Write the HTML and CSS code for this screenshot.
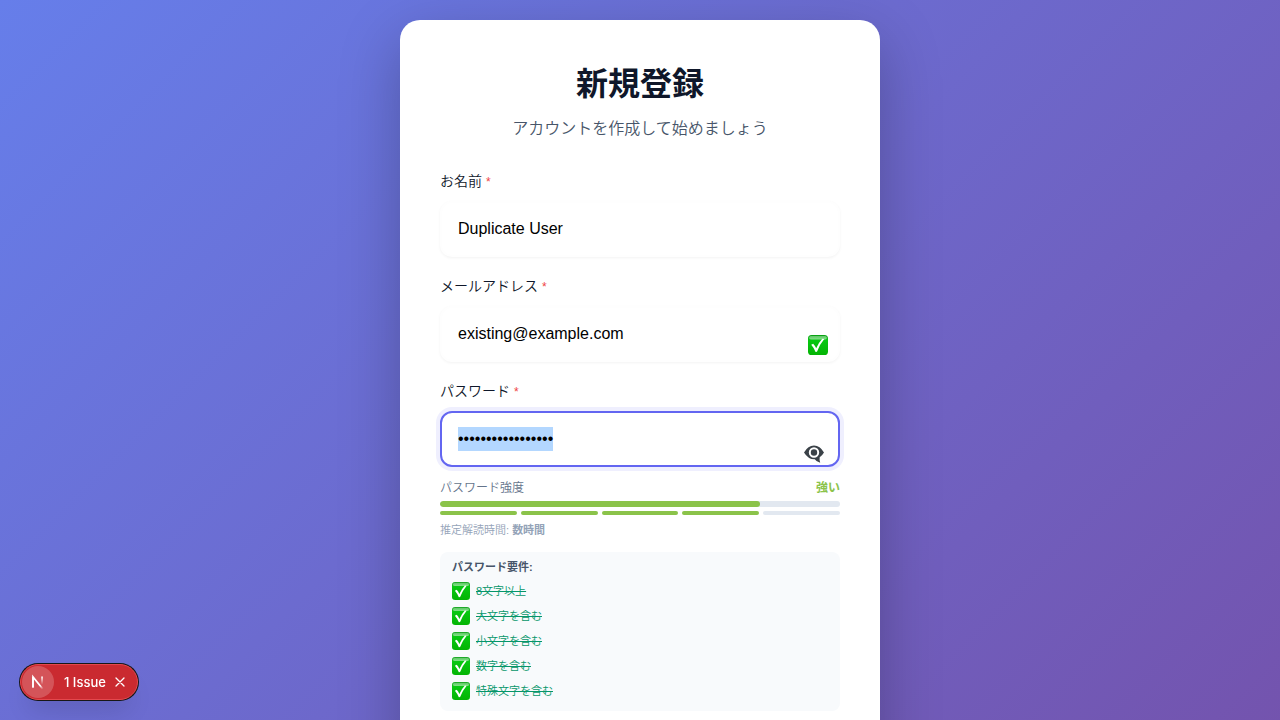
FILE: index.html
```html
<!DOCTYPE html>
<html lang="ja">
<head>
<meta charset="utf-8">
<meta name="viewport" content="width=device-width, initial-scale=1">
<title>新規登録</title>
<link rel="stylesheet" href="styles.css">
</head>
<body>
<svg class="defs" aria-hidden="true">
  <defs>
    <linearGradient id="green" x1="0" y1="0" x2="0" y2="1">
      <stop offset="0" stop-color="#0a9d14"/><stop offset=".25" stop-color="#08c812"/><stop offset="1" stop-color="#04b404"/>
    </linearGradient>
    <linearGradient id="shine" x1="0" y1="0" x2="0" y2="1">
      <stop offset="0" stop-color="#fff" stop-opacity=".35"/><stop offset="1" stop-color="#fff" stop-opacity=".5"/>
    </linearGradient>
    <linearGradient id="fade" x1="0" y1="0" x2="0" y2="1">
      <stop offset="0" stop-color="#fff"/><stop offset="1" stop-color="#fff" stop-opacity="0"/>
    </linearGradient>
    <linearGradient id="tail" gradientUnits="userSpaceOnUse" x1="9" y1="10" x2="13" y2="15">
      <stop offset=".3" stop-color="#fff"/><stop offset="1" stop-color="#fff" stop-opacity="0"/>
    </linearGradient>
  </defs>
  <symbol id="check" viewBox="0 0 20 20">
    <rect width="20" height="20" rx="3.6" fill="url(#green)"/>
    <rect x="1.1" y=".9" width="17.8" height="3.6" rx="1.8" fill="url(#shine)"/>
    <path d="M3.2 9.8 5.2 8.7Q7 10.6 8.2 13.2 11 7.200 14.300 3.800L16.300 4.100Q11.600 9.600 9 16.700L7.600 16.900Q5.800 12.800 3.200 9.800Z" fill="#fff"/>
  </symbol>
</svg>
<div class="scroller">
<main class="page">
  <form class="card">
    <header class="header">
      <h1 class="title">新規登録</h1>
      <p class="subtitle">アカウントを作成して始めましょう</p>
    </header>
    <div class="fields">
      <div class="field">
        <label class="label" for="name">お名前 <span class="required">*</span></label>
        <input class="input" id="name" type="text" value="Duplicate User">
      </div>
      <div class="field">
        <label class="label" for="email">メールアドレス <span class="required">*</span></label>
        <div class="control">
          <input class="input" id="email" type="email" value="existing@example.com">
          <svg class="valid" aria-hidden="true"><use href="#check"/></svg>
        </div>
      </div>
      <div class="field">
        <label class="label" for="password">パスワード <span class="required">*</span></label>
        <div class="control">
          <input class="input" id="password" type="password" value="SecurePassword123">
          <button class="toggle" type="button" aria-label="パスワードを表示">
            <svg viewBox="0 0 20 18" width="20" height="18">
              <path d="M0 7.500Q4 .500 10 .500T20 7.500Q18.300 10.500 15.700 12.300 15.200 15 16.200 17.700 12.300 17 10.800 14.300 4.200 14.500 0 7.500Z" fill="#3b4248"/>
              <circle cx="10" cy="7.500" r="4.200" fill="#3b4248" stroke="#fff" stroke-width="2"/>
            </svg>
          </button>
        </div>
      </div>
    </div>
    <section class="strength">
      <div class="strength-head"><span>パスワード強度</span><strong class="strong">強い</strong></div>
      <div class="meter"><div class="meter-fill" style="width:80%"></div></div>
      <div class="segments"><i class="segment on"></i><i class="segment on"></i><i class="segment on"></i><i class="segment on"></i><i class="segment"></i></div>
      <p class="estimate">推定解読時間: <strong>数時間</strong></p>
    </section>
    <section class="rules">
      <h2 class="rules-title">パスワード要件:</h2>
      <ul class="rules-list">
        <li class="rule"><svg class="tick" aria-hidden="true"><use href="#check"/></svg><s>8文字以上</s></li>
        <li class="rule"><svg class="tick" aria-hidden="true"><use href="#check"/></svg><s>大文字を含む</s></li>
        <li class="rule"><svg class="tick" aria-hidden="true"><use href="#check"/></svg><s>小文字を含む</s></li>
        <li class="rule"><svg class="tick" aria-hidden="true"><use href="#check"/></svg><s>数字を含む</s></li>
        <li class="rule"><svg class="tick" aria-hidden="true"><use href="#check"/></svg><s>特殊文字を含む</s></li>
      </ul>
    </section>
  </form>
</main>
</div>
<aside class="issues">
  <span class="logo">
    <svg viewBox="0 0 16 16" width="16" height="16" aria-hidden="true">
      <path d="M3 13.500V3L12.800 15" fill="none" stroke="url(#tail)" stroke-width="1.700"/>
      <path d="M3 13.500V3" fill="none" stroke="#fff" stroke-width="1.700"/>
      <rect x="11.200" y="2.500" width="1.700" height="8" fill="url(#fade)"/>
    </svg>
  </span>
  <button class="issues-open" type="button">1 Issue</button>
  <button class="issues-close" type="button" aria-label="Close">
    <svg viewBox="0 0 10 10" width="10" height="10"><path d="M1 1 9 9M9 1 1 9" stroke="#fff" stroke-width="1.300" stroke-linecap="round"/></svg>
  </button>
</aside>
<script src="script.js"></script>
</body>
</html>
```
FILE: styles.css
```css
* { box-sizing: border-box; margin: 0; padding: 0; }

body {
  font-family: "Liberation Sans", "Noto Sans CJK JP", sans-serif;
  color: #0f172a;
}

button { border: 0; background: none; color: inherit; font: inherit; cursor: pointer; }

.defs { position: absolute; width: 0; height: 0; }

.scroller { height: 100vh; overflow-y: auto; scrollbar-width: none; }

.page {
  display: flex;
  justify-content: center;
  min-height: 1120px;
  padding: 20px;
  background: linear-gradient(135deg, #667eea 0%, #764ba2 100%);
}

.card {
  width: 100%;
  max-width: 480px;
  padding: 40px;
  border-radius: 20px;
  background: #fff;
  box-shadow: 0 20px 60px rgba(0, 0, 0, .25);
}

.header { margin-bottom: 30px; text-align: center; }
.title { margin-bottom: 9px; font-size: 32px; line-height: 48px; font-weight: 700; }
.subtitle { font-size: 16px; line-height: 24px; font-weight: 350; color: #475569; }

.fields { display: flex; flex-direction: column; gap: 19px; }
.field { display: flex; flex-direction: column; gap: 9px; }
.label { font-size: 14px; line-height: 21px; font-weight: 350; color: #0f172a; }
.required { font-size: 12px; line-height: 1; color: #ef4444; }

.control { position: relative; }
.input {
  display: block;
  width: 100%;
  padding: 14px 16px;
  border: 2px solid #fefefe;
  border-radius: 12px;
  background: #fff;
  box-shadow: 0 1px 3px rgba(0, 0, 0, .05);
  color: #000;
  font: 16px/24px "Liberation Sans", sans-serif;
  outline: none;
}
.input:focus { border-color: #6366f1; box-shadow: 0 0 0 4px rgba(99, 102, 241, .1); }
.input::selection { background: #b3d7ff; color: #000; }

.valid { position: absolute; right: 12px; bottom: 7px; width: 20px; height: 20px; }
.toggle { position: absolute; right: 12px; bottom: 0; display: flex; padding: 4px; }

.strength { margin-top: 12px; }
.strength-head {
  display: flex;
  justify-content: space-between;
  margin-bottom: 4px;
  font-size: 12px;
  line-height: 18px;
  font-weight: 350;
  color: #64748b;
}
.strong { color: #8bc34a; }
.meter { height: 6px; border-radius: 3px; background: #e2e8f0; overflow: hidden; }
.meter-fill { height: 100%; border-radius: 3px; background: #8bc34a; }
.segments { display: flex; gap: 4px; margin-top: 4px; }
.segment { flex: 1; height: 4px; border-radius: 2px; background: #e2e8f0; }
.segment.on { background: #8bc34a; }
.estimate { margin-top: 7px; font-size: 11px; line-height: 17px; font-weight: 350; color: #94a3b8; }
.strong, .estimate strong { font-weight: 700; }

.rules { margin-top: 13px; padding: 7px 12px 11px; border-radius: 8px; background: #f8fafc; }
.rules-title { margin-bottom: 6px; font-size: 11px; line-height: 17px; color: #475569; }
.rules-list { display: flex; flex-direction: column; gap: 7px; list-style: none; }
.rule { display: flex; align-items: center; gap: 6px; font-size: 11px; line-height: 18px; font-weight: 350; color: #059669; }
.tick { width: 18px; height: 18px; }

.issues {
  position: fixed;
  left: 20px;
  bottom: 20px;
  display: flex;
  align-items: center;
  height: 36px;
  padding: 1px 7px 1px 1px;
  border: 1px solid #e5484d;
  border-radius: 18px;
  background: #ca2a30;
  box-shadow: 0 0 0 1px #171717, 0 16px 24px -8px rgba(0, 0, 0, .15);
  color: #fff;
  font: 500 13px/20px Inter, sans-serif;
}
.logo {
  display: flex;
  align-items: center;
  justify-content: center;
  width: 32px;
  height: 32px;
  border-radius: 50%;
  background: rgba(255, 255, 255, .2);
}
.issues-open { padding: 0 4px 0 10px; }
.issues-close { display: flex; padding: 5px; }
```
FILE: script.js
```js
const password = document.getElementById("password");
password.focus({ preventScroll: true });
password.select();
```
